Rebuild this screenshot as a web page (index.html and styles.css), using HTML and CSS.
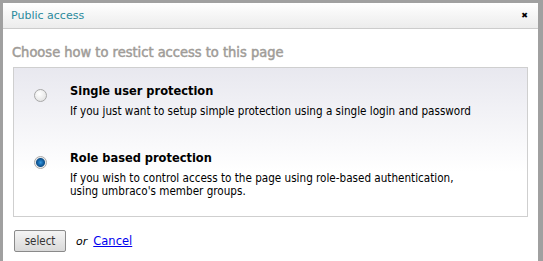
FILE: index.html
```html
<!DOCTYPE html>
<html>

<head>
    <title>Public access</title>
    <link rel="stylesheet" href="styles.css">
</head>

<body>
    <div class="dialog">
        <div class="titlebar">
            <span class="title">Public access</span>
            <span class="close">&#x2716;</span>
        </div>

        <div class="content">
            <h2 class="intro">Choose how to restict access to this page</h2>

            <div class="panel">
                <label class="option">
                    <span class="radio"></span>
                    <span class="option-text">
                        <span class="option-title">Single user protection</span>
                        <span class="option-desc">If you just want to setup simple protection using a single login and password</span>
                    </span>
                </label>

                <label class="option">
                    <span class="radio checked"></span>
                    <span class="option-text">
                        <span class="option-title">Role based protection</span>
                        <span class="option-desc">If you wish to control access to the page using role-based authentication,<br>using umbraco's member groups.</span>
                    </span>
                </label>
            </div>

            <div class="actions">
                <button class="btn">select</button>
                <em class="or">or</em>
                <a href="#" class="cancel">Cancel</a>
            </div>
        </div>
    </div>
</body>

</html>
```

FILE: styles.css
```css
body {
    background-color: #a0a0a0;
    margin: 0;
    padding: 0;
    font-family: "DejaVu Sans", Verdana, sans-serif;
}

.dialog {
    margin: 3px 5px 0 3px;
    background-color: white;
    height: 258px;
}

.titlebar {
    height: 25px;
    display: flex;
    align-items: center;
    justify-content: space-between;
    padding: 0 10px 0 8px;
    background: linear-gradient(#ffffff, #ececec);
    border-bottom: 1px solid #cccccc;
}

.title {
    color: #2b8a9c;
    font-size: 11px;
}

.close {
    font-size: 8px;
    color: black;
    font-weight: bold;
}

.content {
    padding: 0 10px;
}

.intro {
    margin: 12px 0 0 -1px;
    font-family: "DejaVu Sans Condensed", "DejaVu Sans", sans-serif;
    font-size: 14.5px;
    font-weight: normal;
    -webkit-text-stroke: 0.5px #a09c98;
    color: #a09c98;
    height: 26px;
    line-height: 23px;
}

.panel {
    border: 1px solid #cfcfcf;
    background: linear-gradient(#e8e8ef, #ffffff 70%);
    padding: 15px 0 18px 0;
}

.option {
    display: flex;
    align-items: flex-start;
}

.option + .option {
    margin-top: 32px;
}

.radio {
    width: 11px;
    height: 11px;
    border-radius: 50%;
    border: 1px solid #a8a8a8;
    background: radial-gradient(circle at 40% 35%, #ffffff, #dcdcdc);
    margin: 6px 0 0 20px;
    flex-shrink: 0;
}

.radio.checked {
    background: radial-gradient(circle, #3a9ae0 0, #1b72b8 2px, #0d4f8a 4px, #e8e8e8 5px, #ffffff 6px);
}

.option-text {
    margin-left: 23px;
    display: flex;
    flex-direction: column;
    font-family: "DejaVu Sans Condensed", "DejaVu Sans", sans-serif;
}

.option-title {
    font-size: 12.7px;
    font-weight: bold;
    color: black;
    line-height: 16px;
}

.option-desc {
    margin-top: 6px;
    font-size: 11.6px;
    line-height: 13px;
    color: black;
}

.actions {
    display: flex;
    align-items: center;
    margin-top: 13px;
    margin-left: 1px;
}

.btn {
    width: 52px;
    height: 22px;
    font-family: "DejaVu Sans Condensed", sans-serif;
    font-size: 11.5px;
    color: #333;
    border: 1px solid #8a8a8a;
    border-radius: 2px;
    background: linear-gradient(#f4f4f4, #d9d9d9);
    padding: 0;
}

.or {
    margin-left: 10px;
    font-size: 11px;
}

.cancel {
    margin-left: 6px;
    font-size: 11.5px;
    color: #0000ee;
}
```
